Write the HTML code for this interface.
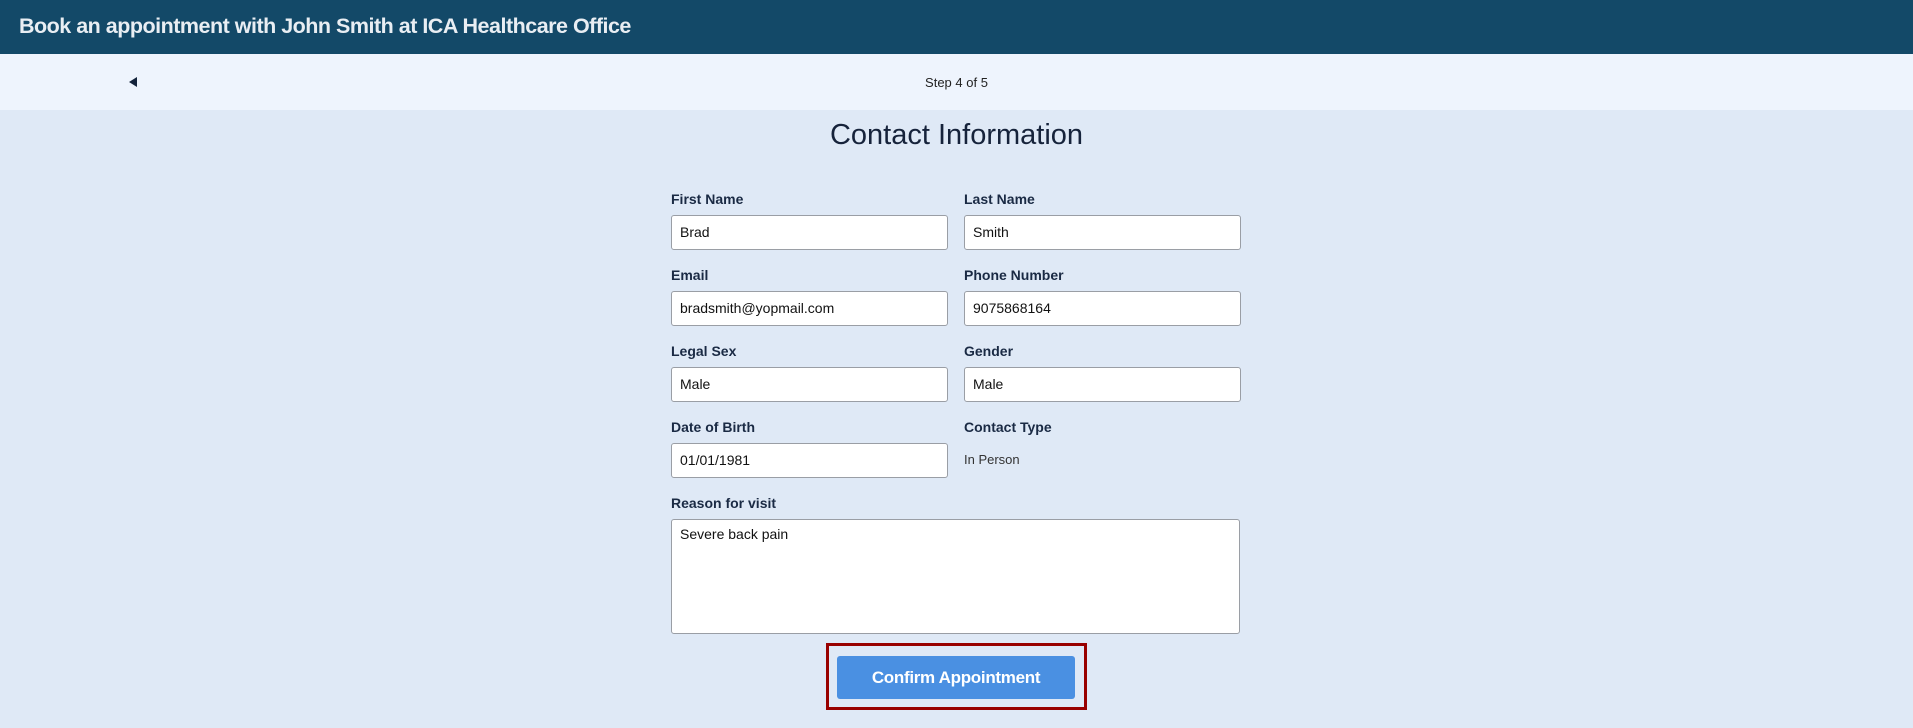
<!DOCTYPE html>
<html><head><style>
*{margin:0;padding:0;box-sizing:border-box}
body{width:1913px;height:728px;background:#dfe9f6;font-family:"Liberation Sans",sans-serif;position:relative;overflow:hidden;color:#16233b}
.hdr{position:absolute;left:0;top:0;width:1913px;height:54px;background:#134968;color:#e9eef3;font-size:21.5px;font-weight:bold;padding-left:19px;line-height:52px;letter-spacing:-0.5px}
.step{position:absolute;left:0;top:54px;width:1913px;height:56px;background:#eef4fd}
.step .t{position:absolute;left:0;width:1913px;text-align:center;top:21px;font-size:13px;color:#222}
.arr{position:absolute;left:129px;top:23px;width:0;height:0;border-top:5px solid transparent;border-bottom:5px solid transparent;border-right:8px solid #13233b}
h1{position:absolute;left:0;width:1913px;text-align:center;top:119px;font-size:29px;font-weight:normal;color:#16233b}
.lb{position:absolute;font-size:14px;font-weight:bold;color:#1a2a44}
.in{position:absolute;width:277px;height:35px;background:#fff;border:1px solid #9a9ea5;border-radius:3px;font-size:14px;padding-left:8px;line-height:33px;color:#111}
.ta{position:absolute;left:671px;top:519px;width:569px;height:115px;background:#fff;border:1px solid #9a9ea5;border-radius:3px;font-size:14px;padding:6px 8px;color:#111}
.red{position:absolute;left:826px;top:643px;width:261px;height:67px;border:3px solid #980000}
.btn{position:absolute;left:837px;top:656px;width:238px;height:43px;background:#4a90e2;border-radius:3px;color:#fff;font-size:17px;font-weight:bold;text-align:center;line-height:43px;letter-spacing:-0.3px}
</style></head><body>
<div class="hdr">Book an appointment with John Smith at ICA Healthcare Office</div>
<div class="step"><div class="arr"></div><div class="t">Step 4 of 5</div></div>
<h1>Contact Information</h1>
<div class="lb" style="left:671px;top:191px">First Name</div>
<div class="lb" style="left:964px;top:191px">Last Name</div>
<div class="in" style="left:671px;top:215px">Brad</div>
<div class="in" style="left:964px;top:215px">Smith</div>
<div class="lb" style="left:671px;top:267px">Email</div>
<div class="lb" style="left:964px;top:267px">Phone Number</div>
<div class="in" style="left:671px;top:291px">bradsmith@yopmail.com</div>
<div class="in" style="left:964px;top:291px">9075868164</div>
<div class="lb" style="left:671px;top:343px">Legal Sex</div>
<div class="lb" style="left:964px;top:343px">Gender</div>
<div class="in" style="left:671px;top:367px">Male</div>
<div class="in" style="left:964px;top:367px">Male</div>
<div class="lb" style="left:671px;top:419px">Date of Birth</div>
<div class="lb" style="left:964px;top:419px">Contact Type</div>
<div class="in" style="left:671px;top:443px">01/01/1981</div>
<div style="position:absolute;left:964px;top:452px;font-size:13px;color:#333">In Person</div>
<div class="lb" style="left:671px;top:495px">Reason for visit</div>
<div class="ta">Severe back pain</div>
<div class="red"></div>
<div class="btn">Confirm Appointment</div>
</body></html>
